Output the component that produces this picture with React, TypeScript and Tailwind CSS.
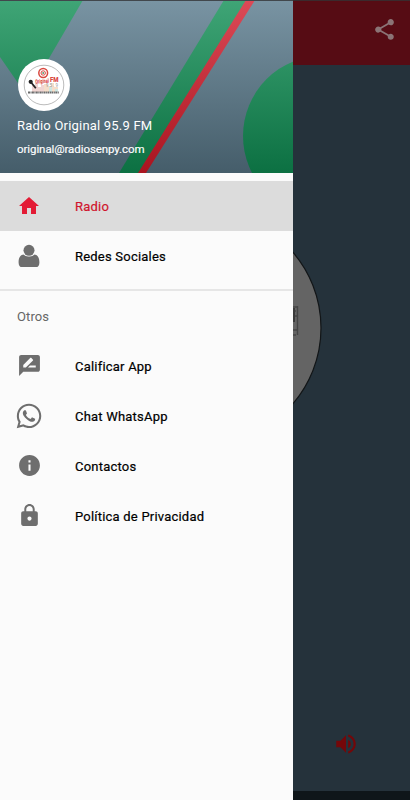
import type { ReactNode } from 'react';
import { FaWhatsapp } from 'react-icons/fa';
import { MdHome, MdInfo, MdLock, MdRateReview, MdShare, MdVolumeUp } from 'react-icons/md';

type MenuItemProps = {
    icon: ReactNode;
    label: string;
    active?: boolean;
};

const PersonIcon = () => (
    <svg width="22" height="24" viewBox="0 0 22 24" fill="currentColor">
        <circle cx="11" cy="6.3" r="5.5" />
        <path d="M5.4 10.6C2.2 11 .6 14 .6 18.4c0 3.1 1.2 4.7 3.6 4.7h13.6c2.4 0 3.6-1.6 3.6-4.7 0-4.4-1.6-7.4-4.8-7.8A7.3 7.3 0 0 1 11 12.4a7.3 7.3 0 0 1-5.6-1.8z" />
    </svg>
);

const StationLogo = () => (
    <svg width="52" height="52" viewBox="0 0 52 52">
        <circle cx="26" cy="26" r="26" fill="#fff" />
        <circle cx="26" cy="26" r="19.8" fill="#fff" stroke="#777" strokeWidth="0.5" />
        <g fill="none" stroke="#d9483f">
            <circle cx="25.2" cy="14" r="4.4" strokeWidth="1.5" />
            <circle cx="25.2" cy="14" r="2.2" strokeWidth="1" />
        </g>
        <circle cx="25.2" cy="14" r="1" fill="#5f9a70" />
        <g opacity="0.35">
            <path d="M14 33v-7h3v-2h3v4h3v-2h3v7z" fill="#d68a80" />
            <path d="M26 33V25h4v2h3v-3h3v4h4v5z" fill="#e5a36b" />
            <path d="M31 33v-5h3v5zM37 33v-3h3v3z" fill="#76b8ad" />
        </g>
        <path d="m12.8 23 5 6.2" stroke="#222" strokeWidth="1.8" />
        <circle cx="12.7" cy="22.8" r="2.1" fill="#222" />
        <g fontFamily="Roboto, sans-serif" fontWeight="900" fill="#d94743">
            <text x="17.5" y="24.8" fontSize="6" textLength="13.5" lengthAdjust="spacingAndGlyphs" transform="rotate(-5 17.5 24.8)">Original</text>
            <text x="32" y="22.5" fontSize="6.5" textLength="8.5" lengthAdjust="spacingAndGlyphs">FM</text>
        </g>
        <text x="28" y="28" fontSize="4.5" fontFamily="Roboto, sans-serif" fill="#999" textLength="12">95.9</text>
        <path d="M10 33.5h31" stroke="#6b6b6b" strokeWidth="1.8" strokeDasharray="2 .5 1 .4" />
    </svg>
);

const HeaderBackdrop = () => (
    <svg className="absolute inset-0" width="293" height="173" viewBox="0 0 293 173">
        <defs>
            <linearGradient id="slate" x1="0" y1="0" x2="0" y2="173" gradientUnits="userSpaceOnUse">
                <stop stopColor="#7994a3" />
                <stop offset="1" stopColor="#455d6a" />
            </linearGradient>
            <linearGradient id="green" x1="0" y1="0" x2="0" y2="173" gradientUnits="userSpaceOnUse">
                <stop stopColor="#3fa576" />
                <stop offset="1" stopColor="#0c7042" />
            </linearGradient>
            <linearGradient id="red" x1="0" y1="0" x2="0" y2="173" gradientUnits="userSpaceOnUse">
                <stop stopColor="#dc4a57" />
                <stop offset="1" stopColor="#a9141f" />
            </linearGradient>
        </defs>
        <path d="M0 0h293v173H0z" fill="url(#slate)" />
        <path d="M0 0h83L27 96 0 57z" fill="url(#green)" />
        <path d="M224 0h23L140 173h-21z" fill="url(#green)" />
        <path d="M246 0h9L146 173h-8z" fill="url(#red)" />
        <circle cx="323.5" cy="136" r="80.5" fill="url(#green)" />
        <path d="M0 0h293v1H0z" fill="#41474c" />
    </svg>
);

const MenuItem = ({ icon, label, active }: MenuItemProps) => (
    <a
        className={`flex h-[50px] items-center text-[13px] tracking-[0.21px] ${
            active ? 'bg-[#dcdcdc] text-[#d0142c]' : 'text-black'
        }`}
    >
        <span className={`ml-4 flex w-[26px] justify-center ${active ? 'text-[#e31b35]' : 'text-[#6e6e6e]'}`}>
            {icon}
        </span>
        <span className="ml-[33px] pt-px whitespace-nowrap [-webkit-text-stroke:0.2px]">{label}</span>
    </a>
);

const Drawer = () => (
    <aside className="flex w-[292.67px] shrink-0 flex-col bg-[#fbfbfb]">
        <header className="relative h-[173px] overflow-hidden text-white">
            <HeaderBackdrop />
            <div className="relative flex flex-col pt-[59px]">
                <div className="ml-[18px] h-[52px]">
                    <StationLogo />
                </div>
                <p className="mt-[5px] ml-[17px] text-[13px] leading-5 tracking-[0.2px]">Radio Original 95.9 FM</p>
                <p className="mt-[5px] ml-[17px] text-[11.5px] leading-4 tracking-[-0.08px] [-webkit-text-stroke:0.15px]">
                    original@radiosenpy.com
                </p>
            </div>
        </header>

        <nav className="pt-2">
            <MenuItem active icon={<MdHome size={24} className="-ml-px" />} label="Radio" />
            <MenuItem icon={<PersonIcon />} label="Redes Sociales" />
            <div className="mt-2 h-[2px] bg-[#e6e6e6]" />
            <h2 className="flex h-[50px] items-center pt-px pl-[17px] text-[13px] tracking-[0.1px] text-[#666]">
                Otros
            </h2>
            <MenuItem icon={<MdRateReview size={25} className="-mt-px" />} label="Calificar App" />
            <MenuItem icon={<FaWhatsapp size={28} className="-mx-1 shrink-0" />} label="Chat WhatsApp" />
            <MenuItem icon={<MdInfo size={25} className="-mt-px" />} label="Contactos" />
            <MenuItem icon={<MdLock size={25} className="-mt-px" />} label="Política de Privacidad" />
        </nav>
    </aside>
);

// Player screen, dimmed by the drawer scrim
const Player = () => (
    <main className="flex min-w-0 flex-1 flex-col overflow-hidden border-t border-[#3a2a2d] bg-[#25323b]">
        <div className="flex h-16 items-center justify-end bg-[#560c14] pr-[13px] text-[#8b7476]">
            <MdShare size={25} className="-mt-[7px]" />
        </div>
        <svg className="mt-[145px] block shrink-0" width="118" height="236" viewBox="0 0 118 236">
            <circle cx="-88" cy="118" r="116" fill="#646464" stroke="#121517" strokeWidth="1.2" />
            <g fill="none" stroke="#454545">
                <path d="M0 97h4M0 101h3M0 106h4M0 120h4M0 125h3M4.5 96v29" strokeWidth="1.4" />
                <path d="M1 98v14" strokeWidth="2" stroke="#3a3a3a" />
            </g>
        </svg>
        <div className="flex flex-1 items-end pb-[34px] pl-10 text-[#740709]">
            <MdVolumeUp size={26} />
        </div>
        <div className="h-[9px] shrink-0 bg-[#0f161a]" />
    </main>
);

export default function App() {
    return (
        <div className="flex h-[800px] w-[410px] overflow-hidden font-['Roboto',sans-serif]">
            <Drawer />
            <Player />
        </div>
    );
}
